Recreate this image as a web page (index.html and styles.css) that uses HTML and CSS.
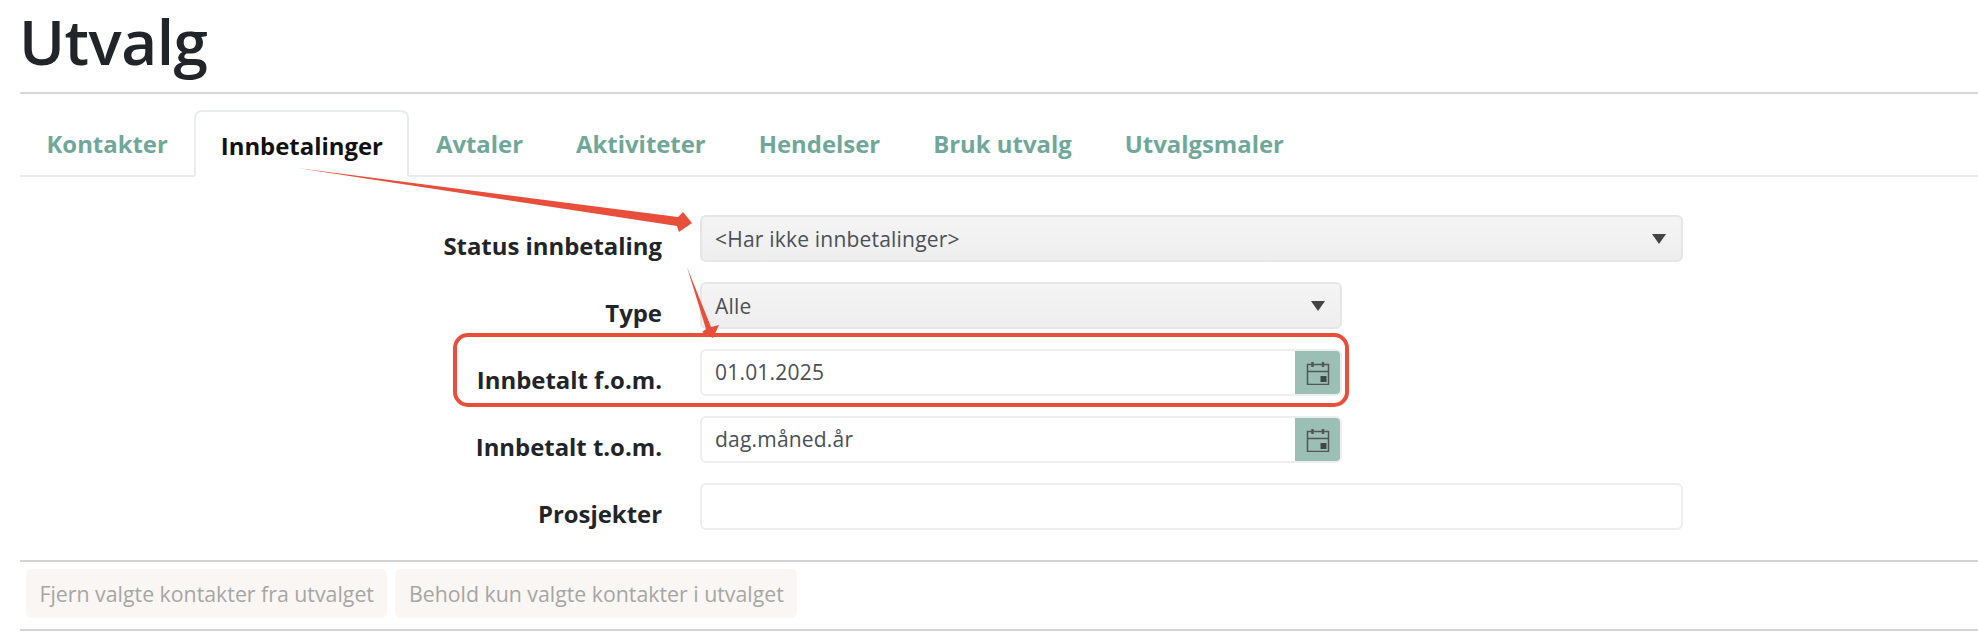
FILE: index.html
```html
<!DOCTYPE html>
<html lang="no">
<head>
<meta charset="utf-8">
<title>Utvalg</title>
<link rel="stylesheet" href="styles.css">
</head>
<body>
<main class="page">
  <h1 class="title">Utvalg</h1>
  <nav class="tabs">
    <a class="tab">Kontakter</a>
    <a class="tab active">Innbetalinger</a>
    <a class="tab">Avtaler</a>
    <a class="tab">Aktiviteter</a>
    <a class="tab">Hendelser</a>
    <a class="tab">Bruk utvalg</a>
    <a class="tab">Utvalgsmaler</a>
  </nav>
  <form class="form">
    <div class="row">
      <label class="label">Status innbetaling</label>
      <div class="control select wide">&lt;Har ikke innbetalinger&gt;</div>
    </div>
    <div class="row">
      <label class="label">Type</label>
      <div class="control select narrow">Alle</div>
    </div>
    <div class="row">
      <label class="label">Innbetalt f.o.m.</label>
      <div class="control date narrow">
        <span class="value">01.01.2025</span>
        <span class="addon"><svg class="cal" viewBox="0 0 24 24" width="24" height="24"><path d="M1.500 3.500H22.500V23.500H1.500ZM1.500 10.500H22.500" fill="none" stroke="#555" stroke-width="1.500"/><path d="M6.500 1V6M17 1V6" stroke="#555" stroke-width="2.500"/><rect x="14.500" y="15" width="6" height="6" fill="#444"/></svg></span>
      </div>
    </div>
    <div class="row">
      <label class="label">Innbetalt t.o.m.</label>
      <div class="control date narrow">
        <span class="value">dag.måned.år</span>
        <span class="addon"><svg class="cal" viewBox="0 0 24 24" width="24" height="24"><path d="M1.500 3.500H22.500V23.500H1.500ZM1.500 10.500H22.500" fill="none" stroke="#555" stroke-width="1.500"/><path d="M6.500 1V6M17 1V6" stroke="#555" stroke-width="2.500"/><rect x="14.500" y="15" width="6" height="6" fill="#444"/></svg></span>
      </div>
    </div>
    <div class="row">
      <label class="label">Prosjekter</label>
      <div class="control wide"></div>
    </div>
  </form>
  <div class="actions">
    <button class="btn" type="button" disabled>Fjern valgte kontakter fra utvalget</button>
    <button class="btn" type="button" disabled>Behold kun valgte kontakter i utvalget</button>
  </div>
</main>
<svg class="annotations" width="1978" height="636" viewBox="0 0 1978 636">
  <rect x="455" y="335" width="892" height="70" rx="13" fill="none" stroke="#e74f3b" stroke-width="4"/>
  <polygon points="297,168 678,217 683,212 692,223 679,232 677,226" fill="#e74f3b"/>
  <polygon points="687,267 711,327 719,325 713,338 702,332 706,329" fill="#e74f3b"/>
</svg>
</body>
</html>
```
FILE: styles.css
```css
* { box-sizing: border-box; }
html, body { margin: 0; padding: 0; background: #fff; }
body { position: relative; width: 1978px; height: 636px; overflow: hidden; font-family: "Open Sans", "Liberation Sans", sans-serif; color: #212529; }
.page { padding-left: 20px; }
.title { margin: 0; height: 94px; border-bottom: 2px solid #d9d9d9; font-size: 62px; font-weight: 550; line-height: 82px; letter-spacing: -0.5px; text-indent: -1px; color: #212529; }
.tabs { display: flex; margin-top: 16px; height: 67px; border-bottom: 2px solid #e8ecef; }
.tab { height: 67px; padding: 18px 26.500px 0; font-size: 23.900px; line-height: 32px; font-weight: 700; color: #6fa899; }
.tab.active { padding: 18px 24.500px 0; color: #111; background: #fff; border: 2px solid #e8ecef; border-bottom-color: #fff; border-radius: 8px 8px 0 0; }
.form { padding-top: 38px; height: 385px; border-bottom: 2px solid #d4d4d4; }
.row { display: flex; height: 47px; margin-bottom: 20px; }
.label { width: 642px; padding-top: 15px; text-align: right; font-size: 23.900px; line-height: 32px; font-weight: 700; color: #212529; }
.control { position: relative; margin-left: 38px; height: 47px; border: 2px solid #eeeeee; border-radius: 6px; font-size: 21px; letter-spacing: 0.200px; line-height: 43px; color: #495057; background: #fff; }
.wide { width: 983px; }
.narrow { width: 642px; }
.select { padding-left: 13px; line-height: 45px; background: linear-gradient(#f4f4f4, #eeeeee); border-color: #e6e6e6; }
.select::after { content: ""; position: absolute; right: 15px; top: 17px; border-left: 7px solid transparent; border-right: 7px solid transparent; border-top: 10px solid #444; }
.date { display: flex; justify-content: space-between; overflow: hidden; }
.value { padding-left: 13px; }
.addon { display: flex; align-items: center; justify-content: center; width: 45px; background: #9bbfb4; }
.actions { display: flex; gap: 8px; height: 69px; padding: 7px 0 0 6px; border-bottom: 2px solid #d4d4d4; }
.btn { height: 49px; padding: 0 13.500px; border: 0; border-radius: 6px; background: #f9f6f3; font-family: inherit; font-size: 21.300px; color: #a6a6a6; }
.annotations { position: absolute; left: 0; top: 0; pointer-events: none; }
```
